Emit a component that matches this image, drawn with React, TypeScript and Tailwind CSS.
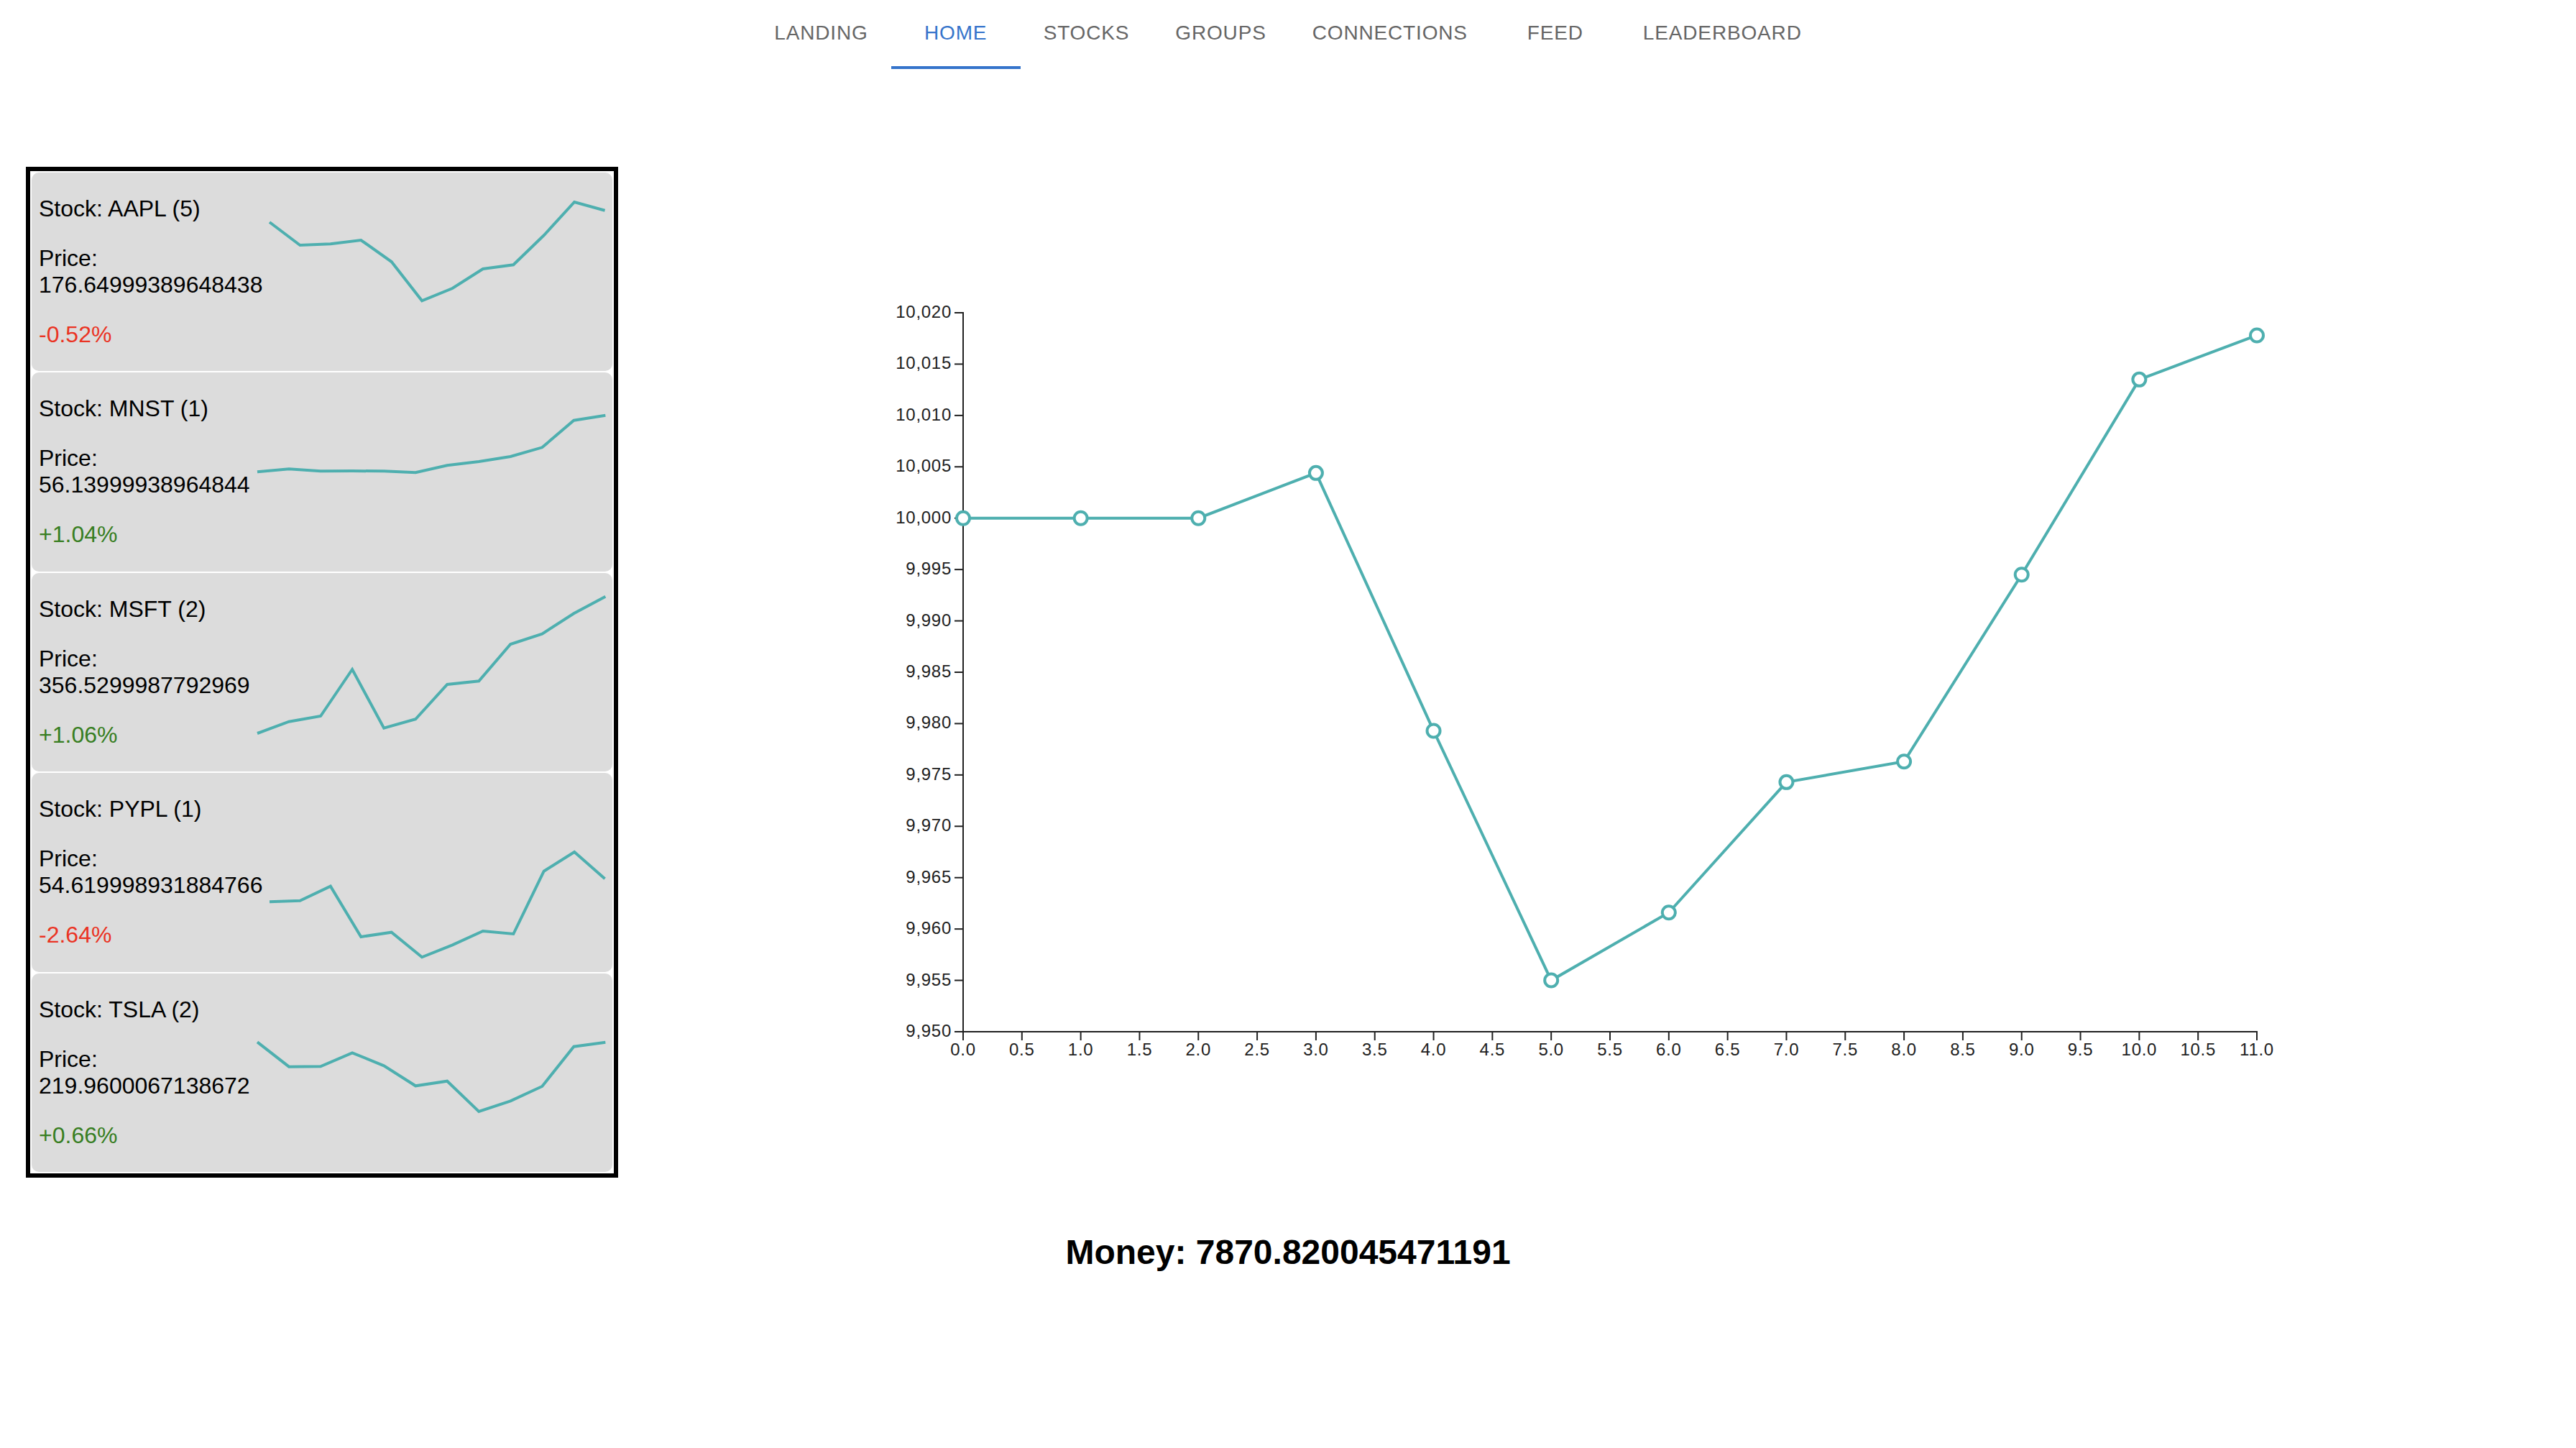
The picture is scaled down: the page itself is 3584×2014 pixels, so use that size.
import { useState } from 'react';

interface Stock {
    symbol: string;
    shares: number;
    price: string;
    change: number;
    trend: number[];
}

const TABS = ['Landing', 'Home', 'Stocks', 'Groups', 'Connections', 'Feed', 'Leaderboard'];

// trend values are heights measured from the top of the card
const STOCKS: Stock[] = [
    {
        symbol: 'AAPL',
        shares: 5,
        price: '176.64999389648438',
        change: -0.52,
        trend: [69, 101, 99.3, 94, 124, 178.3, 161, 134, 128.3, 87.3, 41, 52.7],
    },
    {
        symbol: 'MNST',
        shares: 1,
        price: '56.13999938964844',
        change: 1.04,
        trend: [138.3, 134.3, 137.3, 137, 137.3, 139.3, 129.3, 124, 117, 104.3, 66.7, 59.7],
    },
    {
        symbol: 'MSFT',
        shares: 2,
        price: '356.5299987792969',
        change: 1.06,
        trend: [223, 206.7, 199, 134, 215.7, 203.3, 155, 150.3, 99, 84.7, 56.3, 32.7],
    },
    {
        symbol: 'PYPL',
        shares: 1,
        price: '54.619998931884766',
        change: -2.64,
        trend: [179.3, 177.7, 157.7, 228, 221.7, 256.3, 239.3, 220, 224, 136.7, 110, 147.3],
    },
    {
        symbol: 'TSLA',
        shares: 2,
        price: '219.9600067138672',
        change: 0.66,
        trend: [95.3, 129.7, 129.3, 110.3, 128.3, 156.3, 149.7, 192, 177.3, 157, 101.7, 95.7],
    },
];

const HISTORY = [
    10000, 10000, 10000, 10004.4, 9979.3, 9955, 9961.6, 9974.3, 9976.3, 9994.5, 10013.5, 10017.8,
];

const Navbar = () => {
    const [active, setActive] = useState('Home');

    return (
        <nav className="flex justify-center">
            {TABS.map((tab) => (
                <a
                    key={tab}
                    href={`#${tab.toLowerCase()}`}
                    onClick={() => setActive(tab)}
                    className={`flex h-24 min-w-[180px] items-center justify-center border-b-4 px-8 text-[28px] uppercase tracking-[0.03em] ${
                        active === tab ? 'border-[#3574cb] text-[#3574cb]' : 'border-transparent text-[#666666]'
                    }`}
                >
                    {tab}
                </a>
            ))}
        </nav>
    );
};

const Sparkline = ({ values }: { values: number[] }) => (
    <svg
        viewBox={`0 0 ${values.length - 1} 276`}
        preserveAspectRatio="none"
        className="h-[276px] w-0 flex-1 overflow-visible"
    >
        <polyline
            points={values.map((v, i) => `${i},${v}`).join(' ')}
            fill="none"
            stroke="#4eafaf"
            strokeWidth="4"
            vectorEffect="non-scaling-stroke"
        />
    </svg>
);

const StockCard = ({ stock }: { stock: Stock }) => (
    <li className="flex gap-[10px] rounded-[10px] bg-[#dcdcdc] px-[10px] text-[32px] leading-[37px]">
        <div className="flex flex-col gap-8 pt-8">
            <p>
                Stock: {stock.symbol} ({stock.shares})
            </p>
            <p>
                Price:
                <br />
                {stock.price}
            </p>
            <p className={stock.change < 0 ? 'text-[#ea3323]' : 'text-[#377e22]'}>
                {stock.change > 0 && '+'}
                {stock.change.toFixed(2)}%
            </p>
        </div>
        <Sparkline values={stock.trend} />
    </li>
);

const HistoryChart = () => {
    const x = (v: number) => 100 + (v / 11) * 1800;
    const y = (v: number) => 1100 - ((v - 9950) / 70) * 1000;
    const xTicks = Array.from({ length: 23 }, (_, i) => i / 2);
    const yTicks = Array.from({ length: 15 }, (_, i) => 9950 + i * 5);

    return (
        <svg viewBox="0 0 2000 1200" className="w-full max-w-[2000px] text-[24px] tracking-[0.03em]">
            <g stroke="#212121" strokeWidth="2">
                <line x1="100" y1="99" x2="100" y2="1101" />
                <line x1="99" y1="1100" x2="1901" y2="1100" />
                {xTicks.map((t) => (
                    <line key={t} x1={x(t)} x2={x(t)} y1="1100" y2="1112" />
                ))}
                {yTicks.map((t) => (
                    <line key={t} x1="88" x2="100" y1={y(t)} y2={y(t)} />
                ))}
            </g>
            <g fill="#212121">
                {xTicks.map((t) => (
                    <text key={t} x={x(t)} y="1133" textAnchor="middle">
                        {t.toFixed(1)}
                    </text>
                ))}
                {yTicks.map((t) => (
                    <text key={t} x="84" y={y(t) + 7} textAnchor="end">
                        {t.toLocaleString('en-US')}
                    </text>
                ))}
            </g>
            <g stroke="#4eafaf" strokeWidth="4">
                <polyline points={HISTORY.map((v, i) => `${x(i)},${y(v)}`).join(' ')} fill="none" />
                {HISTORY.map((v, i) => (
                    <circle key={i} cx={x(i)} cy={y(v)} r="9" fill="#ffffff" />
                ))}
            </g>
        </svg>
    );
};

const App = () => {
    return (
        <div className="min-h-screen bg-white font-['Liberation_Sans',Arial,sans-serif] text-black">
            <Navbar />
            <main>
                <div className="mt-34 grid grid-cols-4 items-center">
                    <ul className="mx-9 grid min-h-[1406px] gap-[2px] border-[6px] border-black p-[2px]">
                        {STOCKS.map((stock) => (
                            <StockCard key={stock.symbol} stock={stock} />
                        ))}
                    </ul>
                    <div className="col-span-3 flex justify-center">
                        <HistoryChart />
                    </div>
                </div>
                <h2 className="mt-19 text-center text-[48px] leading-[56px] font-bold">
                    Money: 7870.820045471191
                </h2>
            </main>
        </div>
    );
};

export default App;
